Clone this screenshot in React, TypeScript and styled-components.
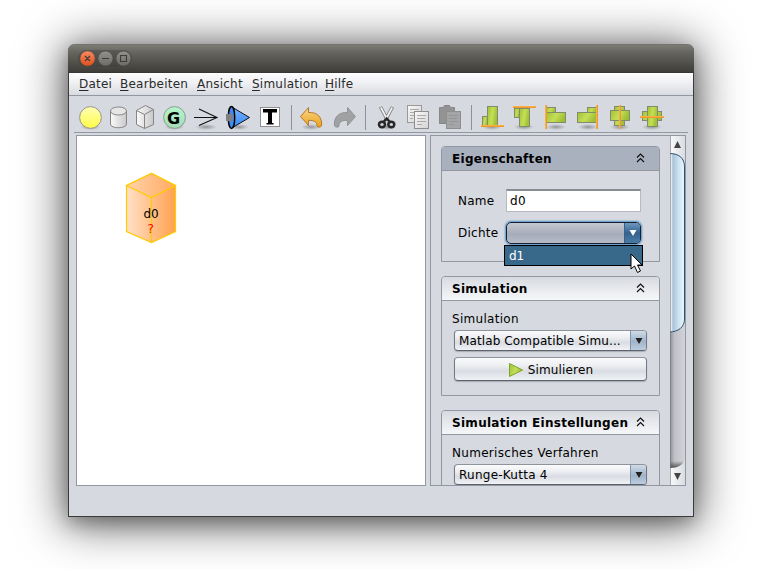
import React from "react";
import styled, { createGlobalStyle, css } from "styled-components";

const GlobalStyle = createGlobalStyle`
  * { box-sizing: border-box; }
  body {
    margin: 0;
    background: #fff;
    overflow: hidden;
    font: 12px/14px "DejaVu Sans", sans-serif;
    color: #000;
  }
  svg { display: block; flex: none; }
`;

const Desktop = styled.div`
  width: 758px;
  height: 569px;
  padding: 44px 64px 0 68px;
  overflow: hidden;
`;

const Window = styled.div`
  width: 626px;
  height: 473px;
  display: flex;
  flex-direction: column;
  background: #d6d9df;
  border-radius: 7px 7px 0 0;
  border: 1px solid #3c3b37;
  border-top: 0;
  box-shadow: 0 6px 18px rgba(0, 0, 0, 0.25), 0 4px 46px 4px rgba(0, 0, 0, 0.62);
`;

const TitleBar = styled.div`
  height: 29px;
  flex: none;
  margin: 0 -1px;
  padding: 6px 0 0 10px;
  border-radius: 7px 7px 0 0;
  background: linear-gradient(#6c6b66 0, #7c7c75 1px, #64635d 9px, #3e3d39 28px, #32312e 29px);
`;

const ControlGroup = styled.div`
  display: flex;
  width: 54px;
  height: 17px;
  border-radius: 9px;
  background: rgba(60, 59, 55, 0.35);
`;

const MenuBar = styled.div`
  height: 23px;
  flex: none;
  display: flex;
  gap: 8px;
  padding: 4px 10px 0;
  border-bottom: 1px solid #9297a1;
  background: linear-gradient(#fdfdfe, #eff0f3 45%, #d8dbe1);
`;

const MenuItem = styled.span<{ $w: number }>`
  width: ${(p) => p.$w}px;
  height: 15px;
  letter-spacing: 0.22px;
  white-space: nowrap;
  color: #2a2a2a;
`;

const MenuText = styled.span`
  display: inline-block;
  &::first-letter {
    text-decoration: underline;
    text-underline-offset: 2px;
  }
`;

const ToolBar = styled.div`
  height: 37px;
  flex: none;
  display: flex;
  margin: 0 5px;
  padding: 4px 0 0 4px;
  border-bottom: 1px solid #9297a1;
`;

const Separator = styled.div`
  width: 1px;
  height: 25px;
  margin: 5px 4px 0 5px;
  background: #8d9096;
`;

const Workspace = styled.div`
  display: flex;
  gap: 4px;
  padding: 2px 7px 0;
`;

const Canvas = styled.div`
  width: 350px;
  height: 351px;
  border: 1px solid #9297a1;
  background: #fff;
  padding: 36px 0 0 48px;
`;

const SidePanel = styled.div`
  width: 256px;
  height: 351px;
  display: flex;
  border: 1px solid #9297a1;
  overflow: hidden;
`;

const TaskList = styled.div`
  width: 239px;
  height: 349px;
  flex: none;
  display: flex;
  flex-direction: column;
  gap: 14px;
  padding: 10px;
  overflow: hidden;
`;

const TaskPane = styled.section<{ $h: number }>`
  width: 219px;
  height: ${(p) => p.$h}px;
  flex: none;
  border: 1px solid #9297a1;
  border-radius: 4px 4px 0 0;
`;

const TaskHeader = styled.header<{ $active?: boolean }>`
  height: 24px;
  display: flex;
  align-items: flex-start;
  justify-content: space-between;
  padding: 5px 14px 0 10px;
  border-bottom: 1px solid #9297a1;
  border-radius: 3px 3px 0 0;
  background: ${(p) => (p.$active ? "#a9b0be" : "linear-gradient(#d7dae0, #f6f7f9)")};
  font-weight: bold;
  letter-spacing: 0.29px;
  white-space: nowrap;
`;

const ChevronIcon = styled.svg`
  margin-top: 1px;
`;

const TaskBody = styled.div`
  padding: 11px 12px 0;
`;

const FormBody = styled.div`
  padding: 18px 0 0 16px;
`;

const FieldRow = styled.label`
  display: flex;
  align-items: center;
  height: 24px;
  margin-bottom: 8px;
`;

const FieldName = styled.span`
  width: 48px;
  letter-spacing: 0.25px;
`;

const TextField = styled.div`
  width: 135px;
  height: 23px;
  margin-top: -2px;
  padding: 3px 3px;
  border: 1px solid #b6b9bf;
  border-top: 2px solid #898c92;
  background: #fff;
  letter-spacing: 0.3px;
`;

const Caption = styled.div`
  height: 15px;
  margin: 0 0 3px -2px;
  letter-spacing: 0.3px;
  white-space: nowrap;
`;

const raised = css`
  border: 1px solid;
  border-color: #8e939c #737a86 #5c636f;
  border-radius: 4px;
  background: linear-gradient(#fbfbfc 0, #eceef1 35%, #d9dce2 60%, #f0f2f5 100%);
  box-shadow: 0 1px 1px rgba(80, 86, 98, 0.35);
`;

const Combo = styled.div<{ $open?: boolean }>`
  ${raised}
  width: ${(p) => (p.$open ? 135 : 193)}px;
  height: 21px;
  display: flex;
  justify-content: space-between;
  overflow: hidden;
  ${(p) =>
    p.$open &&
    css`
      height: 22px;
      border-color: #16202e;
      border-radius: 5px;
      background: linear-gradient(#c5c9d1, #a5abb8 55%, #b6bcc8);
      box-shadow: 0 0 0 1px #73a4d1, 0 0 1px 2px rgba(115, 164, 209, 0.4);
    `}
`;

const ComboText = styled.span<{ $spacing?: number }>`
  padding: 3px 0 0 4px;
  white-space: nowrap;
  letter-spacing: ${(p) => p.$spacing ?? 0.12}px;
`;

const ComboArrow = styled.span<{ $open?: boolean }>`
  width: 16px;
  display: flex;
  align-items: center;
  justify-content: center;
  border-left: 1px solid ${(p) => (p.$open ? "#3b5f85" : "#7d96b0")};
  background: ${(p) =>
    p.$open
      ? "linear-gradient(#6f98bf, #33628d 50%, #4a7ba7)"
      : "linear-gradient(#d0dbe7, #a0b4c9 55%, #bccddd)"};
`;

const RunButton = styled.div`
  ${raised}
  width: 193px;
  height: 24px;
  margin-top: 6px;
  padding-top: 1px;
  display: flex;
  align-items: center;
  justify-content: center;
  gap: 4px;
  letter-spacing: 0.15px;
`;

const PopupAnchor = styled.div`
  position: relative;
`;

const Popup = styled.div`
  position: absolute;
  top: 23px;
  left: -2px;
  z-index: 2;
  width: 139px;
  height: 21px;
  padding: 3px 4px;
  border: 1px solid #000;
  background: #39698a;
  color: #fff;
`;

const Pointer = styled.svg`
  position: absolute;
  left: 124px;
  top: 7px;
`;

const ScrollBar = styled.div`
  width: 15px;
  height: 349px;
  flex: none;
`;

type IconProps = { w: number; x: number; children: React.ReactNode };
/* Every tool shares one 32px high drawing strip; x is where its slice begins. */
const Tool = ({ w, x, children }: IconProps) => (
  <svg width={w} height={32} viewBox={`${x} 100 ${w} 32`}>{children}</svg>
);

const Shadow = ({ cx, rx = 10 }: { cx: number; rx?: number }) => (
  <ellipse cx={cx} cy={127} rx={rx} ry={3} fill="url(#soft)" />
);

const Defs = () => (
  <defs>
    <radialGradient id="soft"><stop stopColor="#555" stopOpacity=".5" /><stop offset="1" stopColor="#555" stopOpacity="0" /></radialGradient>
    <linearGradient id="yellow" x2="0" y2="1"><stop stopColor="#ffffb4" /><stop offset="1" stopColor="#fffb48" /></linearGradient>
    <linearGradient id="mint" x2="0" y2="1"><stop stopColor="#b4f6cb" /><stop offset="1" stopColor="#a4dcb6" /></linearGradient>
    <linearGradient id="metal"><stop stopColor="#fafafa" /><stop offset="1" stopColor="#c9c9c9" /></linearGradient>
    <linearGradient id="blue" x2="0" y2="1"><stop stopColor="#7fb5ff" /><stop offset="1" stopColor="#2f86f5" /></linearGradient>
    <linearGradient id="gold" x2="0" y2="1"><stop stopColor="#fbd98a" /><stop offset="1" stopColor="#eba01c" /></linearGradient>
    <linearGradient id="lime" x2="1" y2=".3"><stop stopColor="#9dc332" /><stop offset=".55" stopColor="#c6de58" /><stop offset="1" stopColor="#9cc033" /></linearGradient>
    <linearGradient id="paper" x2="1" y2="1"><stop stopColor="#f8f8f8" /><stop offset="1" stopColor="#d4d4d4" /></linearGradient>
  </defs>
);

const Block = ({ x, y, w, h }: { x: number; y: number; w: number; h: number }) => (
  <rect x={x + 0.5} y={y + 0.5} width={w - 1} height={h - 1} fill="url(#lime)" stroke="#848b6c" />
);

const Guide = ({ x, y, w, h }: { x: number; y: number; w: number; h: number }) => (
  <>
    <rect x={x} y={y} width={w} height={h} fill="#ec9a2b" />
    <rect x={x} y={y} width={w > h ? w : 1} height={w > h ? 1 : h} fill="#fbae42" />
  </>
);

const Toolbar = () => (
  <ToolBar>
    <Tool w={26} x={78}>
      <Defs />
      <Shadow cx={90.5} />
      <circle cx="90.5" cy="117.5" r="10.9" fill="url(#yellow)" stroke="#929292" />
    </Tool>
    <Tool w={28} x={104}>
      <path d="M110.5 111v13c0 5 16 5 16 0v-13" fill="url(#metal)" stroke="#858585" />
      <ellipse cx="118.5" cy="111" rx="8" ry="4" fill="#e6e6e6" stroke="#858585" />
    </Tool>
    <Tool w={27} x={132}>
      <path d="M136.5 110.5l9-5 8 4v15l-9 4-8-4z" fill="url(#metal)" stroke="#858585" />
      <path d="M136.5 110.5l8 4 9-5M144.5 114.5v14" fill="none" stroke="#858585" />
    </Tool>
    <Tool w={31} x={159}>
      <Shadow cx={174.5} />
      <circle cx="174.5" cy="117.5" r="10.9" fill="url(#mint)" stroke="#8d9990" />
      <text x="173.500" y="124" textAnchor="middle" fontSize="16" fontWeight="bold" fontFamily="DejaVu Sans">G</text>
    </Tool>
    <Tool w={32} x={190}>
      <Shadow cx={206} rx={11} />
      <path d="M194 117.5h23M199 109l18 8.5-18 8" fill="none" stroke="#111" strokeWidth="1.1" />
    </Tool>
    <Tool w={34} x={222}>
      <Shadow cx={239} />
      <path d="M231 106.5l18.5 11L231 128.5z" fill="url(#blue)" stroke="#111" />
      <ellipse cx="231.5" cy="117.5" rx="3.2" ry="11" fill="#3f8bf0" stroke="#000" strokeWidth="1.4" />
      <rect x="226" y="114" width="7" height="7" fill="#808080" />
    </Tool>
    <Tool w={30} x={256}>
      <rect x="260.5" y="107.5" width="19" height="19" fill="#fff" stroke="#8f8f8f" />
      <path d="M263 109h14v3.500h-5v10.500h1.500v1.500h-7V123h1.500v-10.500h-5z" />
    </Tool>
    <Separator />
    <Tool w={34} x={296}>
      <Shadow cx={311} />
      <path d="M300.500 116.500l8-9v5c9-.5 14 5 13 13.500-1.500 1.500-4 1.500-4.500 0 0-4-3-6-8.500-5.500v5z" fill="url(#gold)" stroke="#b5792c" strokeLinejoin="round" />
    </Tool>
    <Tool w={30} x={330}>
      <path d="M355.500 116.500l-8-9v5c-9-.5-14 5-13 13.500 1.500 1.500 4 1.500 4.500 0 0-4 3-6 8.500-5.500v5z" fill="#a0a1a2" stroke="#929394" strokeLinejoin="round" />
    </Tool>
    <Separator />
    <Tool w={32} x={370}>
      <Shadow cx={387} rx={9} />
      <path d="M380.500 107l7 13M392.500 107l-7 13" stroke="#777" strokeWidth="3.400" />
      <path d="M380.800 107.500l6.500 12M392.200 107.500l-6.500 12" stroke="#f0f0f0" strokeWidth="1.800" />
      <g fill="none" stroke="#282828" strokeWidth="2.500">
        <ellipse cx="382" cy="124.500" rx="3" ry="2.800" />
        <ellipse cx="391.300" cy="124.500" rx="3" ry="2.800" />
        <path d="M383.500 122l3.200-3.500 3.200 3.500" />
      </g>
    </Tool>
    <Tool w={32} x={402}>
      <rect x="407.500" y="105.500" width="14" height="17" fill="url(#paper)" stroke="#999" />
      <path d="M410 109.500h9M410 112.500h7M410 115.500h4M410 118.500h3" stroke="#aaa" />
      <rect x="414.500" y="111.500" width="14" height="17" fill="url(#paper)" stroke="#8d8d8d" />
      <path d="M417 115.500h9M417 118.500h8M417 121.500h9M417 124.500h5" stroke="#aaa" />
    </Tool>
    <Tool w={32} x={434}>
      <path d="M439.500 107.500h4l1-2h5l1 2h4v16h-15z" fill="#939394" stroke="#868788" />
      <rect x="446.500" y="111.500" width="14" height="17" fill="#a4a5a6" stroke="#8d8e8f" />
      <path d="M449 115.500h9M449 118.500h8M449 121.500h9M449 124.500h5" stroke="#949596" />
    </Tool>
    <Separator />
    <Tool w={32} x={476}>
      <Shadow cx={492} /><Block x={482} y={116} w={6} h={10} /><Block x={487} y={106} w={11} h={20} /><Guide x={481} y={125} w={23} h={2} />
    </Tool>
    <Tool w={32} x={508}>
      <Shadow cx={524} /><Block x={514} y={108} w={6} h={10} /><Block x={519} y={108} w={11} h={19} /><Guide x={513} y={106} w={23} h={2} />
    </Tool>
    <Tool w={32} x={540}>
      <Shadow cx={556} /><Block x={546} y={107} w={10} h={6} /><Block x={546} y={112} w={20} h={11} /><Guide x={545} y={105} w={2} h={24} />
    </Tool>
    <Tool w={32} x={572}>
      <Shadow cx={588} /><Block x={587} y={107} w={10} h={6} /><Block x={577} y={112} w={20} h={11} /><Guide x={596} y={105} w={2} h={24} />
    </Tool>
    <Tool w={32} x={604}>
      <Shadow cx={620} /><Block x={614} y={106} w={11} h={20} /><Block x={610} y={110} w={20} h={11} /><Guide x={619} y={105} w={2} h={24} />
    </Tool>
    <Tool w={32} x={636}>
      <Shadow cx={652} /><Block x={642} y={111} w={20} h={10} /><Block x={647} y={106} w={11} h={21} /><Guide x={640} y={116} w={24} h={2} />
    </Tool>
  </ToolBar>
);

const menus: [string, number][] = [["Datei", 33], ["Bearbeiten", 69], ["Ansicht", 47], ["Simulation", 65], ["Hilfe", 30]];

const WindowControls = () => (
  <ControlGroup>
    <svg width="54" height="17" viewBox="0 0 54 17">
      <defs>
        <linearGradient id="close" x2="0" y2="1"><stop stopColor="#f68b61" /><stop offset="1" stopColor="#df4f1b" /></linearGradient>
        <linearGradient id="dim" x2="0" y2="1"><stop stopColor="#92918b" /><stop offset="1" stopColor="#6c6b65" /></linearGradient>
      </defs>
      <g stroke="#4a4944" strokeWidth=".7">
        <circle cx="9.500" cy="8.500" r="7.700" fill="url(#close)" />
        <circle cx="27.500" cy="8.500" r="7.500" fill="url(#dim)" />
        <circle cx="45.500" cy="8.500" r="7.500" fill="url(#dim)" />
      </g>
      <path d="M7 6l5 5M12 6l-5 5M24 8.500h7M42.500 5.500h6v6h-6z" stroke="#3d3c38" fill="none" strokeWidth="1.100" />
    </svg>
  </ControlGroup>
);

const Chevrons = () => (
  <ChevronIcon width="9" height="10" viewBox="0 0 9 10">
    <path d="M1 4.500L4.500 1 8 4.500M1 9l3.500-3.500L8 9" fill="none" stroke="#111" strokeWidth="1.200" />
  </ChevronIcon>
);

const Arrow = ({ color }: { color: string }) => (
  <svg width="8" height="6" viewBox="0 0 8 6"><path d="M.5 0h7L4 6z" fill={color} /></svg>
);

const DensityShape = () => (
  <svg width="52" height="72" viewBox="125 172 52 72">
    <defs>
      <linearGradient id="peach"><stop stopColor="#ffe1c8" /><stop offset="1" stopColor="#ffa14f" /></linearGradient>
      <linearGradient id="peachTop"><stop stopColor="#ffd2ab" /><stop offset="1" stopColor="#ffab62" /></linearGradient>
    </defs>
    <path d="M126.500 185.500l25-12 24 12v46l-24 11-25-11z" fill="url(#peach)" stroke="#fc0" strokeWidth="1.200" />
    <path d="M126.500 185.500l25-12 24 12-24 12z" fill="url(#peachTop)" stroke="#fc0" strokeWidth="1.200" />
    <path d="M151.500 197.500v45" fill="none" stroke="#fc0" strokeWidth="1.200" />
    <text x="143.500" y="218" fontSize="12" fontFamily="DejaVu Sans">d0</text>
    <text x="147.500" y="233" fontSize="12" fontFamily="DejaVu Sans" fill="red">?</text>
  </svg>
);

const Scroller = () => (
  <ScrollBar>
    <svg width="15" height="349" viewBox="0 0 15 349">
      <defs>
        <linearGradient id="track"><stop stopColor="#8e9095" /><stop offset=".3" stopColor="#c0c1c6" /><stop offset="1" stopColor="#d2d3d8" /></linearGradient>
        <linearGradient id="thumb"><stop stopColor="#fff" /><stop offset=".13" stopColor="#f4f9fc" /><stop offset=".25" stopColor="#a9c2d8" /><stop offset=".6" stopColor="#cde1ef" /><stop offset="1" stopColor="#e7f8ff" /></linearGradient>
        <linearGradient id="cap"><stop stopColor="#fafafb" /><stop offset="1" stopColor="#d9dce1" /></linearGradient>
        <linearGradient id="trackEnd" x2="0" y2="1"><stop stopColor="#444" stopOpacity="0" /><stop offset="1" stopColor="#444" stopOpacity=".9" /></linearGradient>
      </defs>
      <path d="M0 0h15v349H0z" fill="url(#track)" />
      <path d="M0 325h15v7H0z" fill="url(#trackEnd)" />
      <path d="M0 0h15v27C13 21 8 17 0 17z" fill="url(#cap)" />
      <path d="M0 349h15v-26c-2 6-7 9-15 9z" fill="url(#cap)" />
      <path d="M-1 17.500C9 17.500 14.500 22 14.500 31v152c0 8-6 13-15.500 13z" fill="url(#thumb)" stroke="#2f5272" />
      <path d="M4 12h7L7.500 5zM4 337h7l-3.500 7z" fill="#444" />
      <path d="M.5 0v349" stroke="#73777f" strokeOpacity=".6" />
    </svg>
  </ScrollBar>
);

export default function App() {
  return (
    <Desktop>
      <GlobalStyle />
      <Window>
        <TitleBar><WindowControls /></TitleBar>
        <MenuBar>
          {menus.map(([label, w]) => <MenuItem key={label} $w={w}><MenuText>{label}</MenuText></MenuItem>)}
        </MenuBar>
        <Toolbar />
        <Workspace>
          <Canvas><DensityShape /></Canvas>
          <SidePanel>
            <TaskList>
              <TaskPane $h={116}>
                <TaskHeader $active>Eigenschaften<Chevrons /></TaskHeader>
                <FormBody>
                  <FieldRow><FieldName>Name</FieldName><TextField>d0</TextField></FieldRow>
                  <FieldRow>
                    <FieldName>Dichte</FieldName>
                    <PopupAnchor>
                      <Combo $open><ComboText /><ComboArrow $open><Arrow color="#fff" /></ComboArrow></Combo>
                      <Popup>
                        d1
                        <Pointer width="15" height="22" viewBox="0 0 15 22">
                          <path d="M2 1v15l3.500-3 3 6.500 3-1.500-3-6H13z" fill="#fff" stroke="#000" />
                        </Pointer>
                      </Popup>
                    </PopupAnchor>
                  </FieldRow>
                </FormBody>
              </TaskPane>
              <TaskPane $h={120}>
                <TaskHeader>Simulation<Chevrons /></TaskHeader>
                <TaskBody>
                  <Caption>Simulation</Caption>
                  <Combo><ComboText>Matlab Compatible Simu...</ComboText><ComboArrow><Arrow color="#222" /></ComboArrow></Combo>
                  <RunButton>
                    <svg width="16" height="16" viewBox="0 0 16 16"><path d="M1.500 1.500v13l13-6.500z" fill="url(#lime)" stroke="#7fa52a" strokeLinejoin="round" /></svg>
                    Simulieren
                  </RunButton>
                </TaskBody>
              </TaskPane>
              <TaskPane $h={120}>
                <TaskHeader>Simulation Einstellungen<Chevrons /></TaskHeader>
                <TaskBody>
                  <Caption>Numerisches Verfahren</Caption>
                  <Combo><ComboText $spacing={0.25}>Runge-Kutta 4</ComboText><ComboArrow><Arrow color="#222" /></ComboArrow></Combo>
                </TaskBody>
              </TaskPane>
            </TaskList>
            <Scroller />
          </SidePanel>
        </Workspace>
      </Window>
    </Desktop>
  );
}
